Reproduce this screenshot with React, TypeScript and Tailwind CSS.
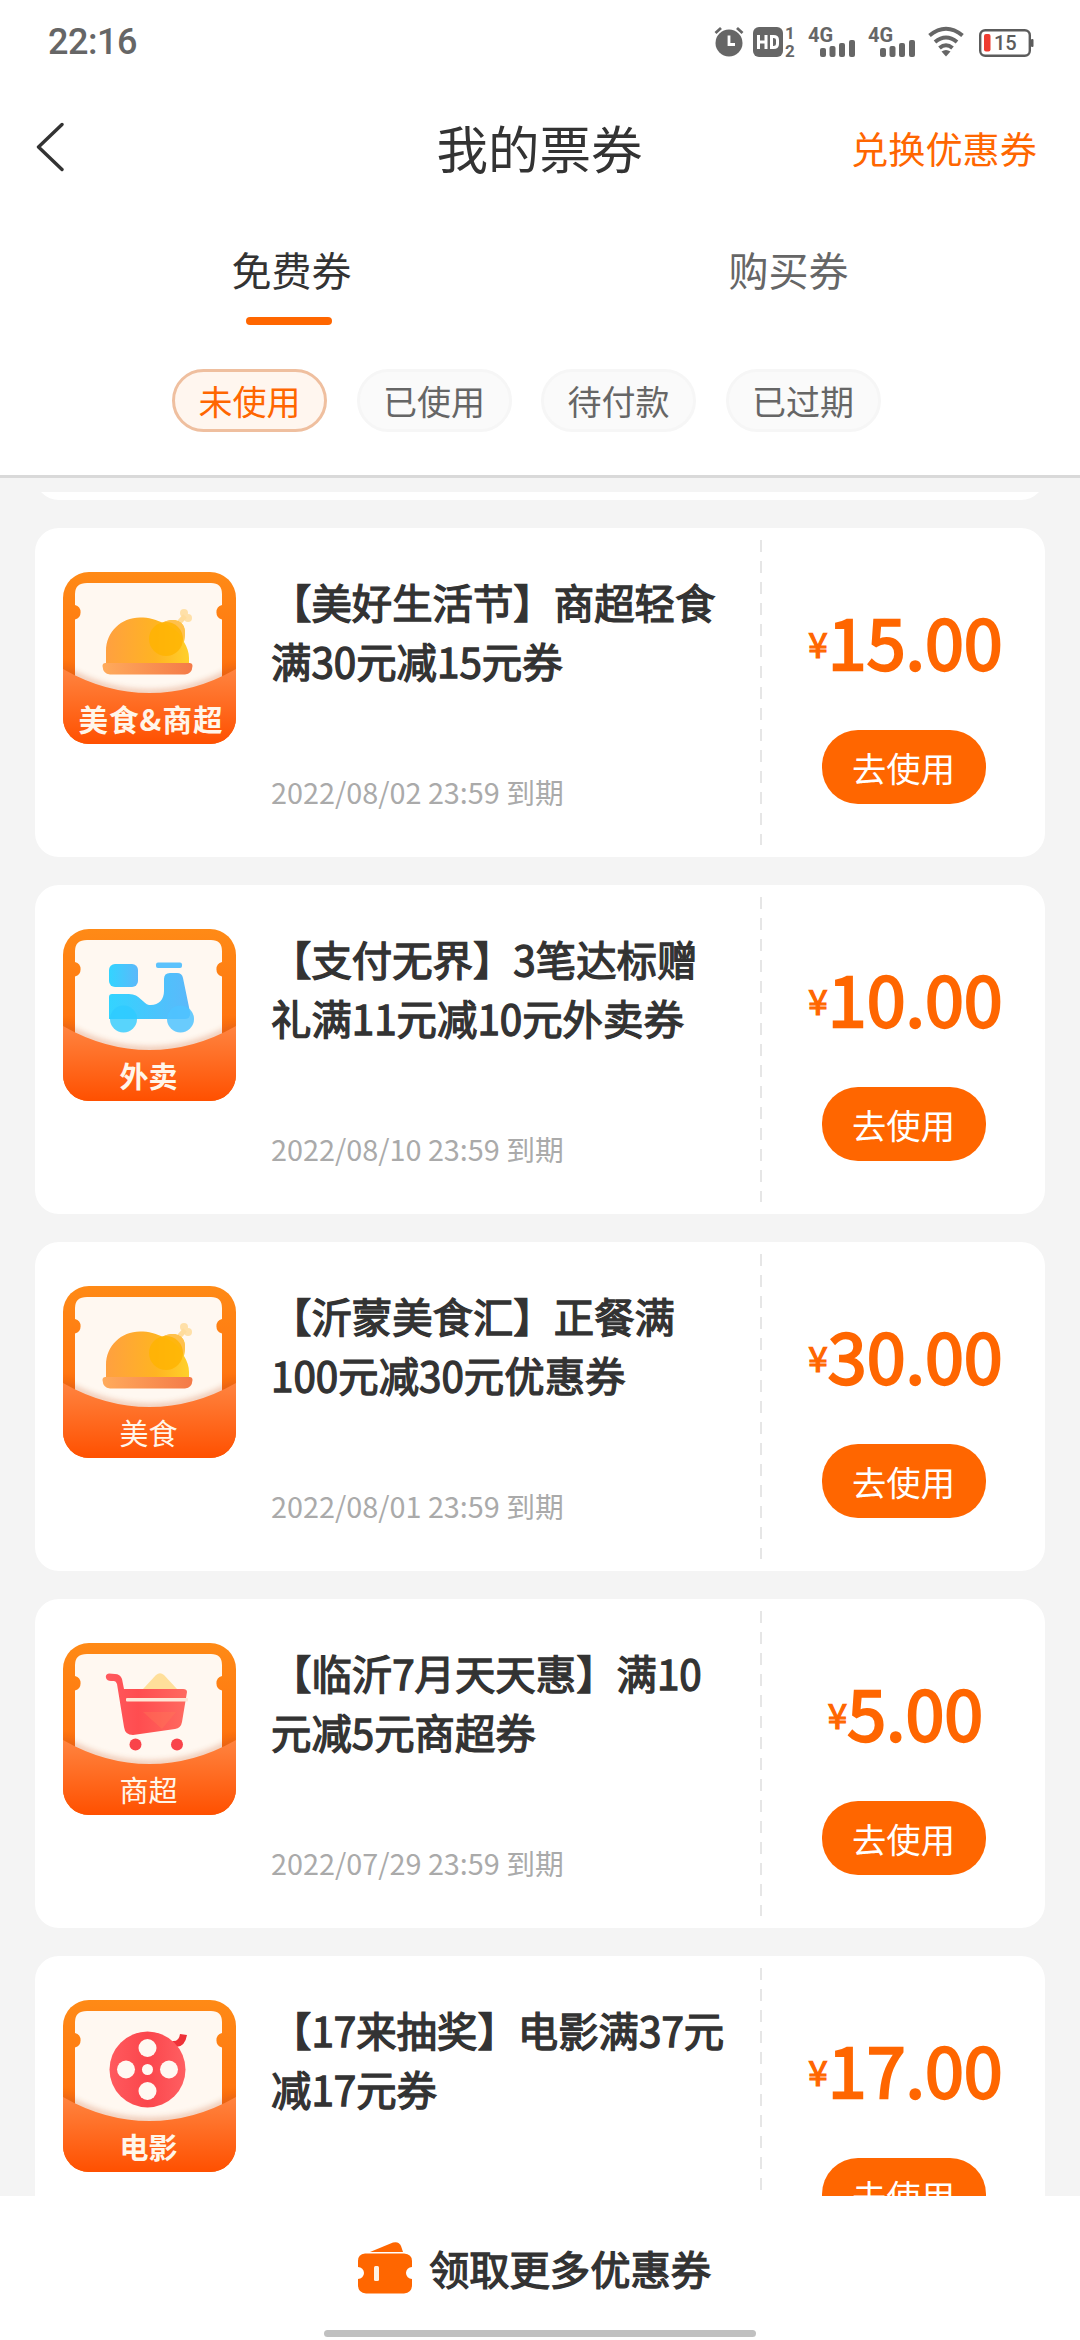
import React from "react";

type Kind = "food" | "scooter" | "cart" | "film";

type Coupon = {
  kind: Kind;
  label: string;
  bold: boolean;
  title: [string, string];
  date: string;
  price: string;
};

const coupons: Coupon[] = [
  { kind: "food", label: "美食&商超", bold: true, title: ["【美好生活节】商超轻食", "满30元减15元券"], date: "2022/08/02 23:59 到期", price: "15.00" },
  { kind: "scooter", label: "外卖", bold: true, title: ["【支付无界】3笔达标赠", "礼满11元减10元外卖券"], date: "2022/08/10 23:59 到期", price: "10.00" },
  { kind: "food", label: "美食", bold: false, title: ["【沂蒙美食汇】正餐满", "100元减30元优惠券"], date: "2022/08/01 23:59 到期", price: "30.00" },
  { kind: "cart", label: "商超", bold: false, title: ["【临沂7月天天惠】满10", "元减5元商超券"], date: "2022/07/29 23:59 到期", price: "5.00" },
  { kind: "film", label: "电影", bold: true, title: ["【17来抽奖】电影满37元", "减17元券"], date: "", price: "17.00" },
];

function Food({ id }: { id: string }) {
  return (
    <g>
      <defs>
        <linearGradient id={`${id}-body`} x1="0" y1="0" x2="1" y2="0">
          <stop offset="0" stopColor="#ffa040" />
          <stop offset="0.6" stopColor="#ffb422" />
          <stop offset="1" stopColor="#ffd02a" />
        </linearGradient>
        <linearGradient id={`${id}-plate`} x1="0" y1="0" x2="1" y2="0">
          <stop offset="0" stopColor="#ffab5c" />
          <stop offset="1" stopColor="#f47a48" />
        </linearGradient>
      </defs>
      <circle cx="121" cy="41" r="4" fill="#ffe0a8" />
      <circle cx="125" cy="46" r="4" fill="#ffe0a8" />
      <path d="M113 54 L122 44" stroke="#ffdc9c" strokeWidth="5" />
      <path d="M43 92 V79 C43 60 58 45.500 77 45.500 C86 45.500 93 47.500 100 51 C108 46 116 48 120 53 C123 57 122 65 121 70 C124 75 126 80 126 86 V92 Z" fill={`url(#${id}-body)`} />
      <path d="M99 51 C108 46 116 48 120 53 C123 58 122 64 121 69 C118 62 109 53 99 51 Z" fill="#ffc04c" />
      <circle cx="103" cy="67" r="17" fill="#ffb300" opacity="0.8" />
      <path d="M39.500 94 Q39.500 91 42.500 91 H126.500 Q129.500 91 129.500 94 Q129 102 122 102.500 H47 Q40 102 39.500 94 Z" fill={`url(#${id}-plate)`} />
    </g>
  );
}

function Scooter({ id }: { id: string }) {
  return (
    <g>
      <defs>
        <linearGradient id={`${id}-s`} x1="0" y1="0" x2="1" y2="0">
          <stop offset="0" stopColor="#33d4ff" />
          <stop offset="1" stopColor="#5cb8fa" />
        </linearGradient>
      </defs>
      <rect x="46" y="35" width="29" height="23" rx="6" fill={`url(#${id}-s)`} />
      <rect x="93" y="33.500" width="26" height="5.500" rx="2" fill="#5cc2fc" />
      <path d="M46 68 Q46 65 49 65 H66 C77 65 80 75 86 76 C95 77 101 71 101 62 V50 Q101 44 107 44 H114 Q119 44 120 49 L127 83 Q128 90 122 90 H46 Z" fill={`url(#${id}-s)`} />
      <circle cx="60.500" cy="90" r="13.500" fill="#2ecbff" opacity="0.8" />
      <circle cx="117.500" cy="90" r="13.500" fill="#4fc3ff" opacity="0.85" />
    </g>
  );
}

function Cart({ id }: { id: string }) {
  return (
    <g>
      <defs>
        <linearGradient id={`${id}-c`} x1="0" y1="0" x2="1" y2="0">
          <stop offset="0" stopColor="#ff5a5e" />
          <stop offset="0.4" stopColor="#ff4d50" />
          <stop offset="1" stopColor="#ff6a60" />
        </linearGradient>
      </defs>
      <path d="M93 32 Q97 28.500 101 32 L114 46 H80 Z" fill="#ffdf9a" />
      <path d="M46 30.500 Q42 31 43 35 Q44 38 48 38 H51 Q53 38 54 41 L61 84 Q62 92 70 92 L112 86 Q118 85 119 79 L124 49 Q124 46 120 46 H61 L59 36 Q57 31 52 31 Z" fill={`url(#${id}-c)`} />
      <path d="M80 69 L99 86 L113 69 Z" fill="#ff7a55" opacity="0.35" />
      <rect x="63" y="55" width="62" height="3.500" rx="1" fill="#ffe6d6" />
      <circle cx="72.500" cy="101.500" r="6" fill="#f9434a" />
      <circle cx="114" cy="101.500" r="6" fill="#f9434a" />
    </g>
  );
}

function Film({ id }: { id: string }) {
  return (
    <g>
      <defs>
        <linearGradient id={`${id}-f`} x1="0" y1="0" x2="1" y2="0">
          <stop offset="0" stopColor="#ff5a5e" />
          <stop offset="0.5" stopColor="#fb464c" />
          <stop offset="1" stopColor="#ff5f62" />
        </linearGradient>
      </defs>
      <path d="M109 41 Q116 42 117 34 L124 35 Q122 47 113 47 Z" fill="#ee3138" />
      <circle cx="84.500" cy="69.500" r="38" fill={`url(#${id}-f)`} />
      <circle cx="84.500" cy="48" r="9" fill="#fff9f2" />
      <circle cx="84.500" cy="91" r="9" fill="#fff9f2" />
      <circle cx="63" cy="69.500" r="9" fill="#fff9f2" />
      <circle cx="106" cy="69.500" r="9" fill="#fff9f2" />
      <circle cx="84.500" cy="69.500" r="5.500" fill="#fff9f2" />
    </g>
  );
}

function CouponIcon({ kind, label, bold, id }: { kind: Kind; label: string; bold: boolean; id: string }) {
  return (
    <svg width="173" height="172" viewBox="0 0 173 172" className="shrink-0">
      <defs>
        <linearGradient id={`${id}-bg`} x1="0" y1="0" x2="0" y2="1">
          <stop offset="0" stopColor="#ff8a16" />
          <stop offset="0.5" stopColor="#ff7610" />
          <stop offset="0.65" stopColor="#f0600a" />
        </linearGradient>
        <linearGradient id={`${id}-pocket`} x1="0" y1="0" x2="0" y2="1">
          <stop offset="0" stopColor="#ff8440" />
          <stop offset="1" stopColor="#ff5000" />
        </linearGradient>
        <clipPath id={`${id}-clip`}>
          <rect width="173" height="172" rx="26" />
        </clipPath>
        <filter id={`${id}-blur`} x="-10%" y="-30%" width="120%" height="160%">
          <feGaussianBlur stdDeviation="3" />
        </filter>
      </defs>
      <g clipPath={`url(#${id}-clip)`}>
        <rect width="173" height="172" fill={`url(#${id}-bg)`} />
        <path d="M24 11 H148 Q159 11 159 22 V33 A7.500 7.500 0 0 0 159 47.500 V125 H12 V47.500 A7.500 7.500 0 0 0 12 33 V22 Q12 11 24 11 Z" fill="#fff8f1" />
        <path d="M0 97 Q42 121 86.500 121 Q131 121 173 97" fill="none" stroke="#c85a28" strokeWidth="5" opacity="0.4" filter={`url(#${id}-blur)`} />
        <path d="M0 97 Q42 121 86.500 121 Q131 121 173 97 V172 H0 Z" fill={`url(#${id}-pocket)`} />
        {kind === "food" && <Food id={id} />}
        {kind === "scooter" && <Scooter id={id} />}
        {kind === "cart" && <Cart id={id} />}
        {kind === "film" && <Film id={id} />}
        <text
          x={label.length > 2 ? 88 : 85.5}
          y="159"
          textAnchor="middle"
          fill="#fff6ea"
          className={label.length > 2 ? "text-[29.500px] font-bold tracking-[1px]" : bold ? "text-[29px] font-bold" : "text-[29px]"}
        >
          {label}
        </text>
      </g>
    </svg>
  );
}

function CouponCard({ coupon, index }: { coupon: Coupon; index: number }) {
  return (
    <article className="flex h-[329px] shrink-0 rounded-[24px] bg-white">
      <div className="flex w-[725px] pl-[28px] pt-[44px]">
        <CouponIcon kind={coupon.kind} label={coupon.label} bold={coupon.bold} id={`coupon-${index}`} />
        <div className="ml-[35px] flex flex-col">
          <h2 className="whitespace-nowrap text-[40.400px] leading-[59px] text-[#333] [-webkit-text-stroke:1.3px_#333]">
            {coupon.title[0]}
            <br />
            {coupon.title[1]}
          </h2>
          {coupon.date && (
            <p className="mt-[82px] whitespace-nowrap text-[28.800px] leading-[40px] text-[#aaa]">{coupon.date}</p>
          )}
        </div>
      </div>
      <div className="my-[12px] w-[2px] bg-[repeating-linear-gradient(180deg,#e6e6e6_0px,#e6e6e6_12px,transparent_12px,transparent_21px)]" />
      <div className="flex flex-1 flex-col items-center pt-[60px]">
        <div className="ml-[4px] flex h-[104px] items-baseline text-[#ff6600]">
          <span className="relative -top-[12px] text-[35px] leading-[104px] [-webkit-text-stroke:1.2px_#ff6600]">¥</span>
          <span className="text-[70px] leading-[104px] [-webkit-text-stroke:2.3px_#ff6600]">{coupon.price}</span>
        </div>
        <button className="mt-[38px] h-[74px] w-[164px] rounded-[36px] bg-[#ff6600] text-[34.300px] leading-[74px] text-white">
          去使用
        </button>
      </div>
    </article>
  );
}

function Signal() {
  return (
    <div className="relative h-[36px] w-[48px]">
      <span className="absolute left-0 top-[-1px] text-[20px] font-bold leading-[24px]">4G</span>
      <svg width="48" height="36" viewBox="0 0 48 36">
        <rect x="12" y="24" width="6" height="9" rx="2" fill="#666" />
        <rect x="21.500" y="22" width="6" height="11" rx="2" fill="#666" />
        <rect x="31" y="19" width="6" height="14" rx="2" fill="#666" />
        <rect x="41" y="16" width="6" height="17" rx="2" fill="#666" />
      </svg>
    </div>
  );
}

function StatusBar() {
  return (
    <div className="flex h-[84px] items-center pl-[48px] pr-[46px] font-['Roboto'] text-[#666]">
      <span className="text-[36px] font-medium leading-[84px] tracking-[-0.5px]">22:16</span>
      <div className="ml-auto flex items-center">
        <svg width="30" height="32" viewBox="0 0 30 32">
          <circle cx="15" cy="17" r="13.500" fill="#666" />
          <path d="M1.500 7 L7 2 M28.500 7 L23 2" stroke="#666" strokeWidth="2.800" />
          <path d="M15 9.500 V18.500 H21" fill="none" stroke="#fff" strokeWidth="2.800" />
        </svg>
        <div className="ml-[9px] flex h-[36px] w-[43px] items-center">
          <svg width="30" height="32" viewBox="0 0 30 32">
            <rect x="0" y="1" width="30" height="30" rx="6" fill="#666" />
            <path d="M5.500 9 V23 M13 9 V23 M5.500 16 H13 M18.500 10.500 H20.500 Q24.500 10.500 24.500 14 V18 Q24.500 21.500 20.500 21.500 H18.500 Z" fill="none" stroke="#fff" strokeWidth="3" />
          </svg>
          <div className="ml-[2px] flex flex-col items-center text-[17px] font-bold leading-[18px]">
            <span>1</span>
            <span>2</span>
          </div>
        </div>
        <div className="ml-[12px] flex gap-[12px]">
          <Signal />
          <Signal />
        </div>
        <svg width="36" height="32" viewBox="0 0 36 32" className="ml-[12px]">
          <path d="M1.500 9.500 Q18 -4 34.500 9.500 M7 16 Q18 7 29 16 M11.500 22 Q18 16.500 24.500 22" fill="none" stroke="#666" strokeWidth="4" />
          <path d="M13.500 25.500 Q18 22.500 22.500 25.500 L18 30.500 Z" fill="#666" />
        </svg>
        <svg width="55" height="28" viewBox="0 0 55 28" className="ml-[15px] mt-[2px]">
          <rect x="1.200" y="1.200" width="49.600" height="25.600" rx="5" fill="none" stroke="#5c5c5c" strokeWidth="2.400" />
          <rect x="5" y="5" width="6.500" height="17.500" rx="2" fill="#ee3b30" />
          <rect x="52" y="10" width="2.500" height="8" rx="1" fill="#5c5c5c" />
          <text x="15" y="21" fill="#5c5c5c" className="text-[20px] font-medium">15</text>
        </svg>
      </div>
    </div>
  );
}

const filters = ["未使用", "已使用", "待付款", "已过期"];

export default function App() {
  return (
    <div className="flex h-[2340px] w-[1080px] flex-col overflow-hidden bg-[#f4f4f4] font-['Noto_Sans_CJK_SC',sans-serif]">
      <header className="h-[478px] shrink-0 border-b-[3px] border-[#d9d9d9] bg-white">
        <StatusBar />
        <div className="grid h-[132px] grid-cols-[1fr_auto_1fr] items-start pl-[38px] pr-[43px]">
          <svg width="28" height="50" viewBox="0 0 28 50" className="-ml-[2px] mt-[38px]">
            <path d="M26 2.500 L2.500 25 L26 47.500" fill="none" stroke="#333" strokeWidth="3.400" strokeLinecap="round" strokeLinejoin="round" />
          </svg>
          <h1 className="-mt-[3px] pl-[4px] text-[51.500px] leading-[132px] text-[#333]">我的票券</h1>
          <span className="-mt-[2px] justify-self-end text-[37.200px] leading-[132px] text-[#f60]">兑换优惠券</span>
        </div>
        <nav className="flex h-[113px] pl-[43px] text-[40px] leading-[58px]">
          <div className="flex w-[497px] flex-col items-center pt-[24px] text-[#333]">
            <span>免费券</span>
            <span className="mr-[6px] mt-[19px] h-[8px] w-[86px] rounded-full bg-[#ff6600]" />
          </div>
          <div className="flex w-[497px] flex-col items-center pt-[24px] text-[#666]">购买券</div>
        </nav>
        <div className="ml-[172px] mt-[40px] flex gap-[29.500px]">
          {filters.map((f, i) => (
            <span
              key={f}
              className={
                i === 0
                  ? "h-[63px] w-[155px] rounded-full border-[3px] border-[#efbf9f] bg-[#fff6ef] text-center text-[34px] leading-[57px] text-[#ff6600]"
                  : "h-[63px] w-[155px] rounded-full border-[3px] border-[#f6f6f6] bg-[#fafafa] text-center text-[34px] leading-[57px] text-[#666]"
              }
            >
              {f}
            </span>
          ))}
        </div>
      </header>
      <main className="mt-[14px] flex min-h-0 flex-1 flex-col gap-[28px] overflow-hidden px-[35px]">
        <div className="flex h-[8px] shrink-0 flex-col justify-end overflow-hidden">
          <div className="h-[329px] shrink-0 rounded-[24px] bg-white" />
        </div>
        {coupons.map((c, i) => (
          <CouponCard key={i} coupon={c} index={i} />
        ))}
      </main>
      <footer className="flex h-[144px] shrink-0 flex-col items-center bg-white">
        <div className="flex h-[134px] items-center pr-[12px] pt-[12px]">
          <svg width="56" height="54" viewBox="0 0 56 54" className="-mt-[3px]">
            <path d="M13 11 L36 1.500 Q42 0 44 5 L46 11 Z" fill="#ff6600" />
            <path d="M8 12.500 H47 Q55 13 55 20 V26 A6 6 0 0 0 55 38 V44 Q55 52 47 52.500 H9 Q1 52 1 44 V38 A6 6 0 0 0 1 26 V20 Q1 13 8 12.500 Z" fill="#ff6600" />
            <rect x="17" y="25" width="5" height="15" rx="1.500" fill="#fff2e4" />
          </svg>
          <span className="-mt-[2px] ml-[16px] text-[40.300px] leading-[60px] text-[#333] [-webkit-text-stroke:1.3px_#333]">领取更多优惠券</span>
        </div>
        <div className="h-[7px] w-[432px] rounded-full bg-[#c0c0c0]" />
      </footer>
    </div>
  );
}
